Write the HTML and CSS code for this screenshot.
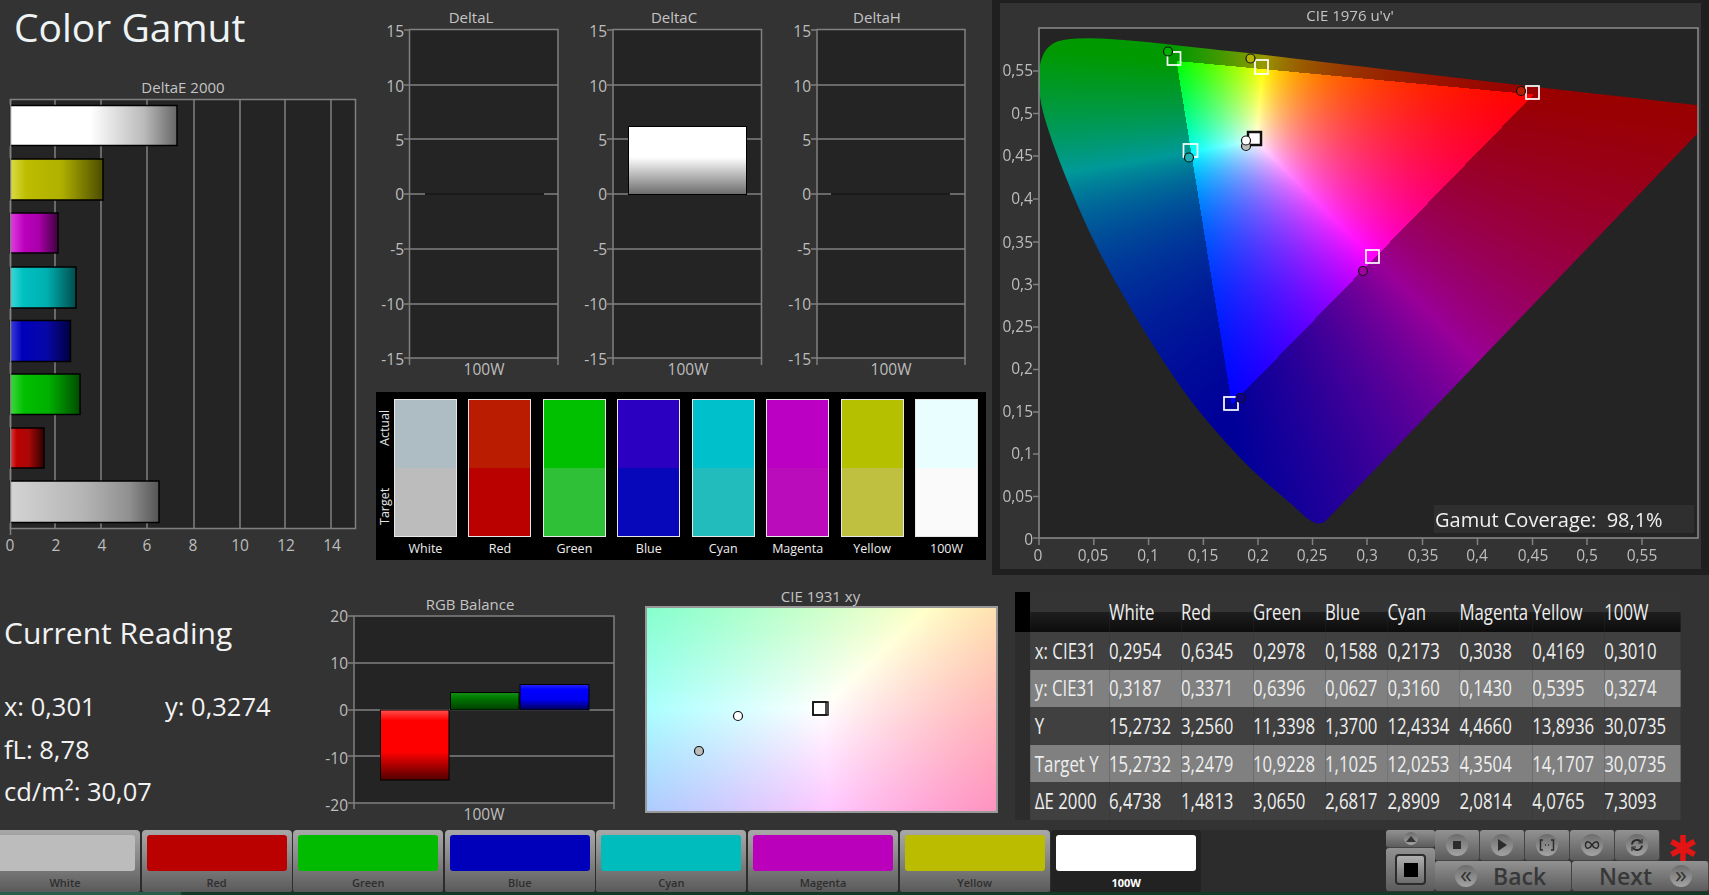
FILE: index.html
```html
<!DOCTYPE html>
<html lang="en">
<head>
    <meta charset="UTF-8">
    <title>Color Gamut</title>
    <link rel="stylesheet" href="styles.css">
    <script src="chart.js" defer></script>
</head>
<body>
<div class="page">
    <div class="top-row">
        <!-- title and deltaE -->
        <div class="col-a">
            <h1 class="title">Color Gamut</h1>
            <svg class="chart-e" width="372" height="480" viewBox="0 80 372 480">
                <defs>
                    <linearGradient id="gw"><stop offset="0" stop-color="#fff"/><stop offset=".48" stop-color="#fff"/><stop offset=".8" stop-color="#bbb"/><stop offset="1" stop-color="#666"/></linearGradient>
                    <linearGradient id="gy"><stop offset="0" stop-color="#dcdc48"/><stop offset=".18" stop-color="#bcbc00"/><stop offset=".55" stop-color="#b0b000"/><stop offset="1" stop-color="#4c4c00"/></linearGradient>
                    <linearGradient id="gm"><stop offset="0" stop-color="#e040e0"/><stop offset=".3" stop-color="#bb00bb"/><stop offset=".6" stop-color="#aa00aa"/><stop offset="1" stop-color="#400040"/></linearGradient>
                    <linearGradient id="gc"><stop offset="0" stop-color="#40d8d8"/><stop offset=".2" stop-color="#00c0c0"/><stop offset=".55" stop-color="#00b0b0"/><stop offset="1" stop-color="#004c4c"/></linearGradient>
                    <linearGradient id="gb"><stop offset="0" stop-color="#4040e0"/><stop offset=".2" stop-color="#0000bb"/><stop offset=".6" stop-color="#0808a8"/><stop offset="1" stop-color="#000040"/></linearGradient>
                    <linearGradient id="gg"><stop offset="0" stop-color="#40d840"/><stop offset=".2" stop-color="#00c000"/><stop offset=".55" stop-color="#00b000"/><stop offset="1" stop-color="#004c00"/></linearGradient>
                    <linearGradient id="gr"><stop offset="0" stop-color="#e04040"/><stop offset=".2" stop-color="#bb0000"/><stop offset=".55" stop-color="#aa0808"/><stop offset="1" stop-color="#300000"/></linearGradient>
                    <linearGradient id="gs"><stop offset="0" stop-color="#d4d4d4"/><stop offset=".5" stop-color="#b4b4b4"/><stop offset=".8" stop-color="#909090"/><stop offset="1" stop-color="#555"/></linearGradient>
                    <linearGradient id="gv" x2="0" y2="1"><stop offset="0" stop-color="#fff"/><stop offset=".45" stop-color="#fff"/><stop offset="1" stop-color="#6c6c6c"/></linearGradient>
                    <linearGradient id="rr" x2="0" y2="1"><stop offset="0" stop-color="#ff5050"/><stop offset=".15" stop-color="#f00"/><stop offset=".6" stop-color="#f00"/><stop offset="1" stop-color="#500000"/></linearGradient>
                    <linearGradient id="rg" x2="0" y2="1"><stop offset="0" stop-color="#189018"/><stop offset=".3" stop-color="#007a00"/><stop offset="1" stop-color="#003c00"/></linearGradient>
                    <linearGradient id="rb" x2="0" y2="1"><stop offset="0" stop-color="#2828ff"/><stop offset=".2" stop-color="#0000ff"/><stop offset=".6" stop-color="#0000f0"/><stop offset="1" stop-color="#000050"/></linearGradient>
                </defs>
                <text class="label" x="183" y="93" text-anchor="middle">DeltaE 2000</text>
                <rect class="plot" x="10.5" y="99.5" width="345" height="429"/>
                <path class="grid" d="M55 100V528M101 100V528M147 100V528M194 100V528M240 100V528M285 100V528M331 100V528M10.5 528V535"/>
                <rect class="bar" x="10" y="105.5" width="167" height="40" fill="url(#gw)"/>
                <rect class="bar" x="10" y="159" width="93" height="41" fill="url(#gy)"/>
                <rect class="bar" x="10" y="213" width="48" height="40" fill="url(#gm)"/>
                <rect class="bar" x="10" y="267" width="66" height="41" fill="url(#gc)"/>
                <rect class="bar" x="10" y="320.5" width="60.500" height="41" fill="url(#gb)"/>
                <rect class="bar" x="10" y="374" width="70" height="40.500" fill="url(#gg)"/>
                <rect class="bar" x="10" y="428" width="34" height="40" fill="url(#gr)"/>
                <rect class="bar" x="10" y="481" width="149" height="41.500" fill="url(#gs)"/>
                <path class="grid" d="M10.5 99V529"/>
                <g class="tick" text-anchor="middle">
                    <text x="10" y="551">0</text><text x="56" y="551">2</text><text x="102" y="551">4</text><text x="147" y="551">6</text>
                    <text x="193" y="551">8</text><text x="240" y="551">10</text><text x="286" y="551">12</text><text x="332" y="551">14</text>
                </g>
            </svg>
        </div>

        <div class="col-b">
            <div class="delta-row">
                <svg width="205" height="385" viewBox="372 0 205 385">
                    <text class="label" x="471" y="23" text-anchor="middle">DeltaL</text>
                    <rect class="plot" x="409.5" y="29.500" width="148.500" height="328.500"/>
                    <path class="grid" d="M410 85H558M410 139H558M410 194H558M410 249H558M410 304H558M404 30H410M404 85H410M404 139H410M404 194H410M404 249H410M404 304H410M404 358H410M409.5 358V365M558 358V365"/>
                    <path class="zero" d="M425 194H544"/>
                    <g class="tick" text-anchor="end">
                        <text x="404" y="37">15</text><text x="404" y="92">10</text><text x="404" y="146">5</text><text x="404" y="200">0</text>
                        <text x="404" y="255">-5</text><text x="404" y="310">-10</text><text x="404" y="365">-15</text>
                    </g>
                    <text class="tick" x="484" y="375" text-anchor="middle">100W</text>
                </svg>
                <svg width="204" height="385" viewBox="577 0 204 385">
                    <text class="label" x="674" y="23" text-anchor="middle">DeltaC</text>
                    <rect class="plot" x="613" y="29.500" width="148.500" height="328.500"/>
                    <path class="grid" d="M613 85H761M613 139H761M613 194H761M613 249H761M613 304H761M607 30H613M607 85H613M607 139H613M607 194H613M607 249H613M607 304H613M607 358H613M613 358V365M761.5 358V365"/>
                    <rect class="thin-bar" x="628.500" y="126.500" width="118" height="68" fill="url(#gv)"/>
                    <g class="tick" text-anchor="end">
                        <text x="607" y="37">15</text><text x="607" y="92">10</text><text x="607" y="146">5</text><text x="607" y="200">0</text>
                        <text x="607" y="255">-5</text><text x="607" y="310">-10</text><text x="607" y="365">-15</text>
                    </g>
                    <text class="tick" x="688" y="375" text-anchor="middle">100W</text>
                </svg>
                <svg width="211" height="385" viewBox="781 0 211 385">
                    <text class="label" x="877" y="23" text-anchor="middle">DeltaH</text>
                    <rect class="plot" x="817" y="29.500" width="148" height="328.500"/>
                    <path class="grid" d="M817 85H965M817 139H965M817 194H965M817 249H965M817 304H965M811 30H817M811 85H817M811 139H817M811 194H817M811 249H817M811 304H817M811 358H817M817 358V365M965 358V365"/>
                    <path class="zero" d="M831 194H950"/>
                    <g class="tick" text-anchor="end">
                        <text x="811" y="37">15</text><text x="811" y="92">10</text><text x="811" y="146">5</text><text x="811" y="200">0</text>
                        <text x="811" y="255">-5</text><text x="811" y="310">-10</text><text x="811" y="365">-15</text>
                    </g>
                    <text class="tick" x="891" y="375" text-anchor="middle">100W</text>
                </svg>
            </div>

            <div class="swatch-panel">
                <div class="side-labels"><span>Actual</span><span>Target</span></div>
                <div class="swatch-col"><div class="swatch"><i class="white-a"></i><i class="white-t"></i></div><div class="swatch-name">White</div></div>
                <div class="swatch-col"><div class="swatch"><i class="red-a"></i><i class="red-t"></i></div><div class="swatch-name">Red</div></div>
                <div class="swatch-col"><div class="swatch"><i class="green-a"></i><i class="green-t"></i></div><div class="swatch-name">Green</div></div>
                <div class="swatch-col"><div class="swatch"><i class="blue-a"></i><i class="blue-t"></i></div><div class="swatch-name">Blue</div></div>
                <div class="swatch-col"><div class="swatch"><i class="cyan-a"></i><i class="cyan-t"></i></div><div class="swatch-name">Cyan</div></div>
                <div class="swatch-col"><div class="swatch"><i class="magenta-a"></i><i class="magenta-t"></i></div><div class="swatch-name">Magenta</div></div>
                <div class="swatch-col"><div class="swatch"><i class="yellow-a"></i><i class="yellow-t"></i></div><div class="swatch-name">Yellow</div></div>
                <div class="swatch-col"><div class="swatch"><i class="w100-a"></i><i class="w100-t"></i></div><div class="swatch-name">100W</div></div>
            </div>
        </div>

        <!-- CIE 1976 -->
        <div class="frame">
            <div class="gamut">
                <canvas id="uv" class="uv-canvas" width="659" height="510"></canvas>
                <svg class="gamut-svg" width="701" height="566" viewBox="1000 3 701 566">
                    <text class="label" x="1350" y="21" text-anchor="middle">CIE 1976 u'v'</text>
                    <rect class="axis-box" x="1039" y="28" width="659" height="510"/>
                    <path class="grid" d="M1033 71H1039M1033 113.500H1039M1033 156H1039M1033 199H1039M1033 242H1039M1033 284.500H1039M1033 327H1039M1033 369.500H1039M1033 412H1039M1033 454H1039M1033 496.500H1039M1033 538H1039M1039 538V545M1093.800 538V545M1148.600 538V545M1203.400 538V545M1258 538V545M1312.500 538V545M1367 538V545M1422.500 538V545M1477.500 538V545M1532.500 538V545M1587 538V545M1642 538V545"/>
                    <g class="tick" text-anchor="end">
                        <text x="1033" y="76">0,55</text><text x="1033" y="119">0,5</text><text x="1033" y="161">0,45</text><text x="1033" y="204">0,4</text>
                        <text x="1033" y="248">0,35</text><text x="1033" y="290">0,3</text><text x="1033" y="332">0,25</text><text x="1033" y="374">0,2</text>
                        <text x="1033" y="417">0,15</text><text x="1033" y="459">0,1</text><text x="1033" y="502">0,05</text><text x="1033" y="545">0</text>
                    </g>
                    <g class="tick" text-anchor="middle">
                        <text x="1038" y="561">0</text><text x="1093" y="561">0,05</text><text x="1148" y="561">0,1</text><text x="1203" y="561">0,15</text>
                        <text x="1258" y="561">0,2</text><text x="1312" y="561">0,25</text><text x="1367" y="561">0,3</text><text x="1423" y="561">0,35</text>
                        <text x="1477" y="561">0,4</text><text x="1533" y="561">0,45</text><text x="1587" y="561">0,5</text><text x="1642" y="561">0,55</text>
                    </g>
                    <!-- targets -->
                    <g class="target">
                        <rect x="1167.500" y="52" width="13" height="13"/>
                        <rect x="1255" y="60" width="13" height="14"/>
                        <rect x="1526" y="86" width="13" height="13"/>
                        <rect x="1183.500" y="144" width="14" height="13"/>
                        <rect x="1366" y="250" width="13" height="13"/>
                        <rect x="1224" y="397" width="14" height="13"/>
                    </g>
                    <rect class="target-w" x="1248" y="132" width="13" height="13"/>
                    <!-- actual -->
                    <g class="actual">
                        <circle cx="1168" cy="51.500" r="4.500" fill="#00b000"/>
                        <circle cx="1250.500" cy="58.500" r="4.500" fill="#b4b400"/>
                        <circle cx="1521" cy="91" r="4.500" fill="#b91c00"/>
                        <circle cx="1189" cy="157.500" r="4.500" fill="#20b0b0"/>
                        <circle cx="1246" cy="146" r="4.500" fill="#bbb"/>
                        <circle cx="1246" cy="140.500" r="4.500" fill="#fff"/>
                        <circle cx="1363" cy="271" r="4.500" fill="#a000a0"/>
                        <circle cx="1240.500" cy="398" r="4.500" fill="#10008c"/>
                    </g>
                    <rect class="coverage-box" x="1434" y="505" width="260" height="28"/>
                    <text class="coverage" x="1435" y="527" xml:space="preserve">Gamut Coverage:  98,1%</text>
                </svg>
            </div>
        </div>
    </div>

    <div class="mid-row">
        <div class="reading">
            <h2 class="reading-title">Current Reading</h2>
            <div class="reading-line"><span class="reading-x">x: 0,301</span><span>y: 0,3274</span></div>
            <div class="reading-line">fL: 8,78</div>
            <div class="reading-line">cd/m²: 30,07</div>
        </div>

        <svg class="chart-rgb" width="310" height="255" viewBox="330 575 310 255">
            <text class="label" x="470" y="610" text-anchor="middle">RGB Balance</text>
            <rect class="plot" x="354" y="616" width="260" height="187"/>
            <path class="grid" d="M354 663H614M354 710H614M354 756H614M348 616H354M348 663H354M348 710H354M348 756H354M348 803H354M354 803V809M614 803V809"/>
            <rect class="thin-bar" x="380.500" y="710" width="68.500" height="70" fill="url(#rr)"/>
            <rect class="thin-bar" x="450.500" y="692.500" width="68.500" height="17.500" fill="url(#rg)"/>
            <rect class="thin-bar" x="520" y="684.500" width="69" height="25.500" fill="url(#rb)"/>
            <g class="tick" text-anchor="end">
                <text x="348" y="622">20</text><text x="348" y="669">10</text><text x="348" y="716">0</text><text x="348" y="764">-10</text><text x="348" y="811">-20</text>
            </g>
            <text class="tick" x="484" y="820" text-anchor="middle">100W</text>
        </svg>

        <div class="cie-xy">
            <div class="cie-title">CIE 1931 xy</div>
            <div class="xy-plot">
                <canvas id="xy" width="352" height="205"></canvas>
                <svg class="xy-marks" width="352" height="205">
                    <circle class="actual" cx="92" cy="109" r="4.500" fill="#fff"/>
                    <circle class="actual" cx="53" cy="144" r="4.500" fill="#bbb"/>
                    <rect x="167" y="95" width="15" height="13" fill="#fff" stroke="#111" stroke-width="1.500"/>
                    <rect x="167" y="95" width="13" height="13" fill="none" stroke="#111" stroke-width="1.500"/>
                </svg>
            </div>
        </div>

        <div class="table-wrap">
            <table class="readings">
                <colgroup>
                    <col class="col-strip"><col class="col-name"><col class="col-std"><col class="col-std"><col class="col-std">
                    <col class="col-blue"><col class="col-std"><col class="col-mag"><col class="col-std"><col class="col-last">
                </colgroup>
                <tr class="head"><td class="strip"></td><td></td><td>White</td><td>Red</td><td>Green</td><td>Blue</td><td>Cyan</td><td>Magenta</td><td>Yellow</td><td>100W</td></tr>
                <tr class="dark"><td class="strip"></td><td>x: CIE31</td><td>0,2954</td><td>0,6345</td><td>0,2978</td><td>0,1588</td><td>0,2173</td><td>0,3038</td><td>0,4169</td><td>0,3010</td></tr>
                <tr class="light"><td class="strip"></td><td>y: CIE31</td><td>0,3187</td><td>0,3371</td><td>0,6396</td><td>0,0627</td><td>0,3160</td><td>0,1430</td><td>0,5395</td><td>0,3274</td></tr>
                <tr class="dark"><td class="strip"></td><td>Y</td><td>15,2732</td><td>3,2560</td><td>11,3398</td><td>1,3700</td><td>12,4334</td><td>4,4660</td><td>13,8936</td><td>30,0735</td></tr>
                <tr class="light"><td class="strip"></td><td>Target Y</td><td>15,2732</td><td>3,2479</td><td>10,9228</td><td>1,1025</td><td>12,0253</td><td>4,3504</td><td>14,1707</td><td>30,0735</td></tr>
                <tr class="dark"><td class="strip"></td><td>ΔE 2000</td><td>6,4738</td><td>1,4813</td><td>3,0650</td><td>2,6817</td><td>2,8909</td><td>2,0814</td><td>4,0765</td><td>7,3093</td></tr>
            </table>
        </div>
    </div>

    <div class="bottom-bar">
        <div class="tabs">
            <div class="tab"><div class="tab-color c-white"></div><div class="tab-label">White</div></div>
            <div class="tab"><div class="tab-color c-red"></div><div class="tab-label">Red</div></div>
            <div class="tab"><div class="tab-color c-green"></div><div class="tab-label">Green</div></div>
            <div class="tab"><div class="tab-color c-blue"></div><div class="tab-label">Blue</div></div>
            <div class="tab"><div class="tab-color c-cyan"></div><div class="tab-label">Cyan</div></div>
            <div class="tab"><div class="tab-color c-magenta"></div><div class="tab-label">Magenta</div></div>
            <div class="tab"><div class="tab-color c-yellow"></div><div class="tab-label">Yellow</div></div>
            <div class="tab selected"><div class="tab-color c-100w"></div><div class="tab-label">100W</div></div>
        </div>
        <div class="controls">
            <div class="ctl-left">
                <div class="btn ctl-up"><span class="knob small"><svg width="12" height="8" viewBox="0 0 12 8"><path d="M6 1L11 7H1Z" fill="#333"/></svg></span></div>
                <div class="btn ctl-big"><span class="big-icon"><i></i></span></div>
            </div>
            <div class="ctl-right">
                <div class="ctl-row">
                    <div class="btn tool"><span class="knob"><svg width="12" height="12"><rect x="2" y="2" width="8" height="8" fill="#2c2c2c"/></svg></span></div>
                    <div class="btn tool"><span class="knob"><svg width="12" height="14"><path d="M2 1L11 7L2 13Z" fill="#2c2c2c"/></svg></span></div>
                    <div class="btn tool"><span class="knob"><svg width="16" height="12" fill="none" stroke="#2c2c2c" stroke-width="1.500"><path d="M4 1H1.500V11H4M12 1H14.500V11H12M6 6H7M9 6H10"/></svg></span></div>
                    <div class="btn tool"><span class="knob"><svg width="16" height="10" fill="none" stroke="#2c2c2c" stroke-width="1.500"><path d="M8 5C6 2 4 1.500 2.800 2C1 2.800 1 7.200 2.800 8C4 8.500 6 8 8 5C10 2 12 1.500 13.200 2C15 2.800 15 7.200 13.200 8C12 8.500 10 8 8 5Z"/></svg></span></div>
                    <div class="btn tool"><span class="knob"><svg width="14" height="14" fill="none" stroke="#2c2c2c" stroke-width="2"><path d="M2 6.500A5 5 0 0 1 11 4M12 7.500A5 5 0 0 1 3 10"/><path d="M12 1V5H8M2 13V9H6" stroke-width="1.200"/></svg></span></div>
                    <div class="star"><svg width="28" height="28" stroke="#e41414" stroke-width="5.500"><path d="M14 1V27M2.500 7.500L25.500 20.500M25.500 7.500L2.500 20.500"/></svg></div>
                </div>
                <div class="ctl-row">
                    <div class="btn nav nav-back"><span class="knob wide">«</span><span class="nav-text">Back</span></div>
                    <div class="btn nav nav-next"><span class="nav-text">Next</span><span class="knob wide">»</span></div>
                </div>
            </div>
        </div>
    </div>
    <div class="strip-bottom"></div>
</div>
</body>
</html>
```

FILE: styles.css
```css
* {
    box-sizing: border-box;
}
html, body {
    margin: 0;
    height: 100%;
    overflow: hidden;
    background: #333;
}
body {
    font-family: "Open Sans", "Noto Sans", sans-serif;
    color: #eee;
}
svg {
    display: block;
}
.page {
    width: 1709px;
    height: 895px;
    display: flex;
    flex-direction: column;
}

/* rows */
.top-row {
    display: flex;
    height: 575px;
}
.mid-row {
    display: flex;
    height: 255px;
}
.col-a {
    width: 372px;
}
.col-b {
    width: 620px;
}

.title {
    margin: 0;
    height: 80px;
    padding: 2px 0 0 14px;
    font-size: 39px;
    line-height: 50px;
    font-weight: 400;
    color: #eef3f6;
}

/* chart parts */
.label {
    font-size: 15px;
    fill: #c4c4c4;
}
.tick {
    font-size: 15.500px;
    fill: #bdbdbd;
}
.plot {
    fill: #242424;
    stroke: #808080;
    stroke-width: 1.500;
}
.grid {
    fill: none;
    stroke: #808080;
    stroke-width: 1.500;
}
.zero {
    stroke: #000;
    stroke-width: 1.500;
}
.bar {
    stroke: #000;
    stroke-width: 1.500;
}
.thin-bar {
    stroke: #000;
    stroke-width: 1;
}
.delta-row {
    display: flex;
    height: 392px;
}
.chart-rgb {
    overflow: visible;
}

/* actual vs target */
.swatch-panel {
    display: flex;
    gap: 11.500px;
    width: 610px;
    height: 168px;
    margin-left: 4px;
    padding: 7px 8px 0 0;
    background: #000;
}
.side-labels {
    writing-mode: vertical-rl;
    transform: rotate(180deg);
    display: flex;
    flex-direction: row-reverse;
    justify-content: space-between;
    width: 18px;
    height: 138px;
    margin-right: -11.500px;
    padding: 12px 0 11px;
    font-size: 12.500px;
    line-height: 18px;
    text-align: center;
    color: #e4e4e4;
}
.swatch-col {
    width: 63px;
}
.swatch {
    display: flex;
    flex-direction: column;
    height: 138px;
    border: 1px solid #e8e8e8;
}
.swatch i {
    flex: 1;
}
.swatch-name {
    margin-top: 3px;
    text-align: center;
    font-size: 12.500px;
    line-height: 17px;
    color: #eee;
}
.white-a { background: #aebcc4; }
.white-t { background: #bcbcbc; }
.red-a { background: #b91c00; }
.red-t { background: #bb0000; }
.green-a { background: #00c000; }
.green-t { background: #30c038; }
.blue-a { background: #2c00c0; }
.blue-t { background: #0808bb; }
.cyan-a { background: #00c0cc; }
.cyan-t { background: #22bcbc; }
.magenta-a { background: #bb00c4; }
.magenta-t { background: #bb0cbb; }
.yellow-a { background: #b4c000; }
.yellow-t { background: #c0c040; }
.w100-a { background: #e8feff; }
.w100-t { background: #fafafa; }

/* CIE 1976 */
.frame {
    width: 717px;
    height: 575px;
    padding: 3px 8px 6px;
    background: #1f1f1f;
}
.gamut {
    position: relative;
    height: 566px;
    background: #333;
}
.uv-canvas {
    position: absolute;
    left: 39px;
    top: 25px;
    background: #242424;
}
.gamut-svg {
    position: relative;
}
.axis-box {
    fill: none;
    stroke: #8c8c8c;
    stroke-width: 1.500;
}
.target rect {
    fill: none;
    stroke: #fff;
    stroke-width: 1.700;
}
.target-w {
    fill: #fff;
    stroke: #111;
    stroke-width: 2.500;
}
.actual {
    stroke: #111;
    stroke-width: 1.200;
}
.coverage-box {
    fill: #2f2f2f;
}
.coverage {
    font-size: 20px;
    fill: #f0f0f0;
    white-space: pre;
}

/* current reading */
.reading {
    width: 330px;
    padding: 40px 0 0 4px;
    color: #f2f2f2;
}
.reading-title {
    margin: 0 0 34px;
    font-size: 30px;
    line-height: 36px;
    font-weight: 400;
}
.reading-line {
    font-size: 25.500px;
    line-height: 42.500px;
}
.reading-x {
    display: inline-block;
    width: 161px;
}

/* CIE 1931 */
.cie-xy {
    width: 370px;
    padding-left: 6px;
}
.cie-title {
    height: 32px;
    padding: 11px 0 0;
    margin-right: 15px;
    text-align: center;
    font-size: 15px;
    line-height: 20px;
    color: #c4c4c4;
}
.xy-plot {
    position: relative;
    width: 351px;
    height: 205px;
    outline: 2px solid #999;
    outline-offset: -1px;
    overflow: hidden;
}
.xy-plot canvas {
    display: block;
}
.xy-marks {
    position: absolute;
    left: 0;
    top: 0;
}

/* table */
.table-wrap {
    width: 666px;
    margin-left: 5px;
    padding-top: 17px;
}
.readings {
    table-layout: fixed;
    width: 832px;
    border-collapse: collapse;
    transform: scaleX(.8);
    transform-origin: left top;
    font-size: 21px;
    color: #eee;
}
.readings td {
    padding: 0;
    height: 37.600px;
    line-height: 26px;
    white-space: nowrap;
    overflow: visible;
}
.readings td:nth-child(2) {
    padding-left: 6px;
}
.col-strip { width: 18.750px; }
.col-name { width: 98.750px; }
.col-std { width: 90px; }
.col-blue { width: 78px; }
.col-mag { width: 91px; }
.col-last { width: 95.400px; }
.head td {
    height: 40px;
    background: linear-gradient(#343434 50%, #1e1e1e 50%, #0c0c0c);
}
.head td.strip {
    background: #000;
}
.dark td {
    background: #404040;
}
.light td {
    background: #808080;
}
.readings td.strip {
    padding: 0;
}
.dark td.strip,
.light td.strip {
    background: #2c2c2c;
}

/* bottom */
.bottom-bar {
    display: flex;
    height: 62px;
    background: #2c2c2c;
}
.tabs {
    display: flex;
    gap: 1.600px;
    width: 1396px;
    margin-left: -10px;
    flex-shrink: 0;
}
.tab {
    width: 150px;
    padding: 5px 5px 0;
    background: linear-gradient(#a8a8a8, #8c8c8c 40%, #5a5a5a);
    border-radius: 4px 4px 2px 2px;
    text-align: center;
}
.tab-color {
    height: 36px;
    border-radius: 3px;
}
.tab-label {
    margin-top: 4px;
    font-size: 11px;
    line-height: 15px;
    font-weight: 600;
    color: #2e2e2e;
}
.tab.selected {
    background: #222;
}
.tab.selected .tab-label {
    color: #fff;
    font-weight: 700;
}
.c-white { background: #bcbcbc; }
.c-red { background: #bb0000; }
.c-green { background: #00bb00; }
.c-blue { background: #0000bb; }
.c-cyan { background: #00bcbc; }
.c-magenta { background: #bb00bb; }
.c-yellow { background: #bbbb00; }
.c-100w { background: #fff; }

.controls {
    display: flex;
    flex-shrink: 0;
    width: 323px;
    background: #333;
}
.btn {
    display: flex;
    align-items: center;
    justify-content: center;
    background: linear-gradient(#929292, #5c5c5c);
    border-radius: 3px;
}
.ctl-left {
    width: 49px;
    height: 61px;
}
.ctl-up {
    height: 18px;
    border-bottom: 1px solid #444;
}
.ctl-big {
    height: 43px;
}
.big-icon {
    display: flex;
    align-items: center;
    justify-content: center;
    width: 31px;
    height: 31px;
    border: 2px solid #2c2c2c;
    border-radius: 4px;
    background: linear-gradient(#b0b0b0, #6c6c6c);
}
.big-icon i {
    display: block;
    width: 14px;
    height: 14px;
    background: #000;
}
.ctl-right {
    width: 274px;
}
.ctl-row {
    display: flex;
    height: 30.500px;
}
.tool {
    width: 45px;
    border-right: 1px solid #444;
    border-bottom: 1px solid #444;
}
.knob {
    display: flex;
    align-items: center;
    justify-content: center;
    width: 22px;
    height: 22px;
    border-radius: 50%;
    background: linear-gradient(#6c6c6c, #a4a4a4);
}
.knob.small {
    width: 14px;
    height: 13px;
}
.knob.wide {
    font-size: 24px;
    line-height: 18px;
    padding-bottom: 4px;
    color: #333;
}
.star {
    flex: 1;
    display: flex;
    justify-content: center;
    padding: 4px 4px 0 0;
}
.nav {
    width: 137px;
    justify-content: flex-start;
    border-right: 1px solid #444;
}
.nav-back {
    padding-left: 20px;
    gap: 16px;
}
.nav-next {
    padding-left: 27px;
    gap: 18px;
}
.nav-text {
    font-size: 23px;
    font-weight: 600;
    color: #383838;
}
.strip-bottom {
    height: 3px;
    background: linear-gradient(90deg, #2a5c4a 180px, #123a24 182px, #123a24);
}
```

FILE: chart.js
```js
// spectral locus 700nm down to 380nm, in canvas pixels
const locus = [[683,80],[570,67],[442,52.9],[287.5,34.2],[222,26.6],[168,20.5],[123.5,15.8],[87,11.8],[55,10],[22,11],[8,19],[1,33],[-0.5,49],[1,74.5],[12,111],[31,160.5],[57,219],[91,280],[126,336.5],[158,382],[206,436],[237,463],[257,480],[268,491],[280,497],[291,491]];

// chromaticity to display colour, negative channels mean outside the gamut
function chromaToRgb(x, y) {
    const X = x / y, Z = (1 - x - y) / y;
    let r = 3.2406 * X - 1.5372 - 0.4986 * Z;
    let g = -0.9689 * X + 1.8758 + 0.0415 * Z;
    let b = 0.0557 * X - 0.204 + 1.057 * Z;
    const dim = Math.min(r, g, b) < 0 ? 153 : 255;
    r = Math.max(r, 0); g = Math.max(g, 0); b = Math.max(b, 0);
    const max = Math.max(r, g, b) || 1;
    return [r / max * dim, g / max * dim, b / max * dim];
}

function paint(id, pixelToXy) {
    const canvas = document.getElementById(id);
    const ctx = canvas.getContext("2d");
    const img = ctx.createImageData(canvas.width, canvas.height);
    let i = 0;
    for (let py = 0; py < canvas.height; py++) {
        for (let px = 0; px < canvas.width; px++) {
            const [x, y] = pixelToXy(px, py);
            const c = chromaToRgb(x, Math.max(y, 0.001));
            img.data[i++] = c[0];
            img.data[i++] = c[1];
            img.data[i++] = c[2];
            img.data[i++] = 255;
        }
    }
    ctx.putImageData(img, 0, 0);
    return ctx;
}

const uvCtx = paint("uv", function (px, py) {
    const u = px / 1096, v = (510 - py) / 849;
    const d = 6 * u - 16 * v + 12;
    return [9 * u / d, 4 * v / d];
});
uvCtx.globalCompositeOperation = "destination-in";
uvCtx.beginPath();
uvCtx.moveTo(locus[0][0], locus[0][1]);
for (let n = 1; n < locus.length - 1; n++) {
    const p = locus[n], q = locus[n + 1];
    uvCtx.quadraticCurveTo(p[0], p[1], (p[0] + q[0]) / 2, (p[1] + q[1]) / 2);
}
uvCtx.closePath();
uvCtx.fill();

paint("xy", function (px, py) {
    return [0.2878 + px / 352 * 0.05, 0.3542 - py / 205 * 0.051];
});
```
